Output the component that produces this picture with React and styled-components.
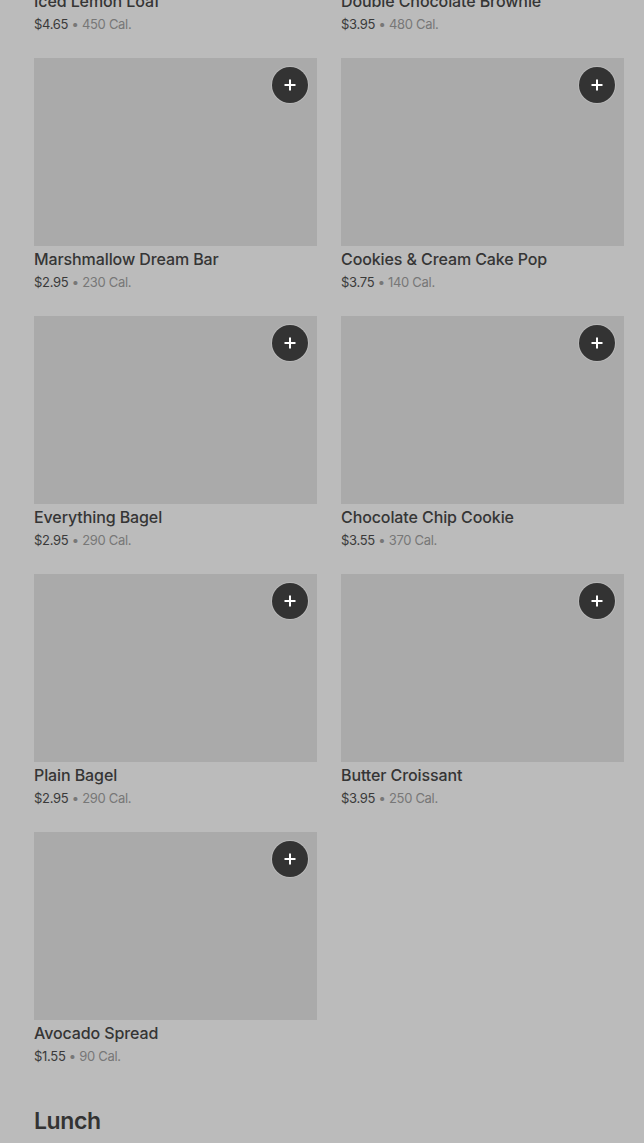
import React from "react";
import styled, { createGlobalStyle } from "styled-components";

const items = [
  { name: "Iced Lemon Loaf", price: "$4.65", cal: "450 Cal." },
  { name: "Double Chocolate Brownie", price: "$3.95", cal: "480 Cal." },
  { name: "Marshmallow Dream Bar", price: "$2.95", cal: "230 Cal." },
  { name: "Cookies & Cream Cake Pop", price: "$3.75", cal: "140 Cal." },
  { name: "Everything Bagel", price: "$2.95", cal: "290 Cal." },
  { name: "Chocolate Chip Cookie", price: "$3.55", cal: "370 Cal." },
  { name: "Plain Bagel", price: "$2.95", cal: "290 Cal." },
  { name: "Butter Croissant", price: "$3.95", cal: "250 Cal." },
  { name: "Avocado Spread", price: "$1.55", cal: "90 Cal." },
];

const GlobalStyle = createGlobalStyle`
  html, body {
    margin: 0;
    padding: 0;
    background: #bbbbbb;
    overflow: hidden;
  }
  body {
    font-family: Inter, "Noto Sans", sans-serif;
    color: #333;
  }
`;

const Page = styled.div`
  height: 1143px;
  overflow: hidden;
  background: #bbbbbb;
`;

// shifted up to show the menu as it sits mid-scroll
const Scroller = styled.div`
  margin-top: -200px;
  padding: 0 20px 0 34px;
`;

const Grid = styled.div`
  display: grid;
  grid-template-columns: repeat(2, 283px);
  column-gap: 24px;
  row-gap: 24px;
`;

const Card = styled.div`
  display: flex;
  flex-direction: column;
`;

const Photo = styled.div`
  position: relative;
  height: 188px;
  background: #aaaaaa;
`;

const AddButton = styled.button`
  position: absolute;
  top: 9px;
  right: 9px;
  width: 36px;
  height: 36px;
  border-radius: 50%;
  border: none;
  padding: 0;
  background: #333333;
  box-shadow: 0 0 0 1px rgba(200, 200, 200, 0.5);
  display: flex;
  align-items: center;
  justify-content: center;
`;

const Name = styled.div`
  margin-top: 3px;
  font-size: 16px;
  font-weight: 500;
  line-height: 20px;
  letter-spacing: -0.1px;
  color: #353535;
  white-space: nowrap;
`;

const Meta = styled.div`
  margin-top: 3px;
  font-size: 13px;
  line-height: 20px;
  letter-spacing: -0.3px;
  color: #777777;
`;

const Price = styled.span`
  color: #3a3a3a;
`;

const Section = styled.h2`
  margin: 39px 0 0;
  font-size: 23px;
  font-weight: 600;
  line-height: 32px;
  color: #333333;
  letter-spacing: -0.4px;
`;

const Plus = () => (
  <svg width="14" height="14" viewBox="0 0 14 14">
    <path d="M7 1.5v11M1.5 7h11" stroke="#fff" strokeWidth="2" />
  </svg>
);

export default function App() {
  return (
    <Page>
      <GlobalStyle />
      <Scroller>
        <Grid>
          {items.map((it) => (
            <Card key={it.name}>
              <Photo>
                <AddButton aria-label="Add">
                  <Plus />
                </AddButton>
              </Photo>
              <Name>{it.name}</Name>
              <Meta>
                <Price>{it.price}</Price> • {it.cal}
              </Meta>
            </Card>
          ))}
        </Grid>
        <Section>Lunch</Section>
      </Scroller>
    </Page>
  );
}
